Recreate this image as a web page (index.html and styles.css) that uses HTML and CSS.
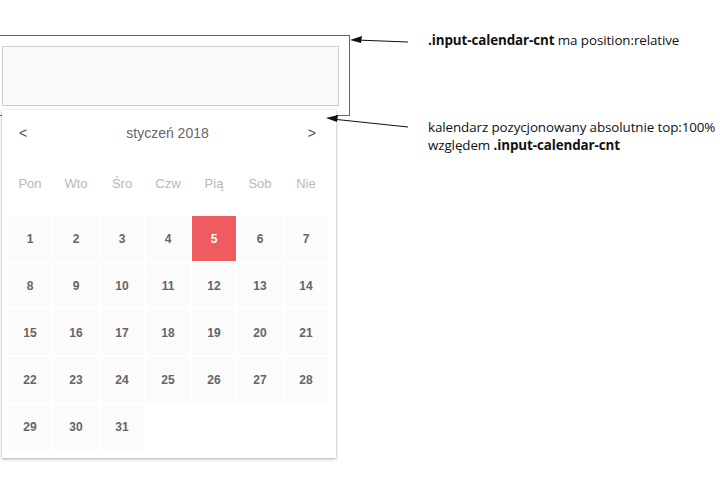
FILE: index.html
```html
<!DOCTYPE html>
<html lang="pl">
<head>
    <meta charset="UTF-8">
    <title>input calendar</title>
    <link rel="stylesheet" href="styles.css">
</head>
<body>
    <div class="stage">
        <div class="input-calendar-cnt">
            <div class="input-wrap">
                <input class="input" type="text">
                <div class="calendar">
                    <div class="cal-head">
                        <span class="cal-nav">&lt;</span>
                        <span class="cal-title">styczeń 2018</span>
                        <span class="cal-nav">&gt;</span>
                    </div>
                    <div class="cal-weekdays">
                        <span>Pon</span><span>Wto</span><span>Śro</span><span>Czw</span><span>Pią</span><span>Sob</span><span>Nie</span>
                    </div>
                    <div class="cal-days">
                        <span class="day">1</span><span class="day">2</span><span class="day">3</span><span class="day">4</span><span class="day active">5</span><span class="day">6</span><span class="day">7</span>
                        <span class="day">8</span><span class="day">9</span><span class="day">10</span><span class="day">11</span><span class="day">12</span><span class="day">13</span><span class="day">14</span>
                        <span class="day">15</span><span class="day">16</span><span class="day">17</span><span class="day">18</span><span class="day">19</span><span class="day">20</span><span class="day">21</span>
                        <span class="day">22</span><span class="day">23</span><span class="day">24</span><span class="day">25</span><span class="day">26</span><span class="day">27</span><span class="day">28</span>
                        <span class="day">29</span><span class="day">30</span><span class="day">31</span>
                    </div>
                </div>
            </div>
        </div>

        <svg class="arrows" width="720" height="478" viewBox="0 0 720 478">
            <line x1="408" y1="42" x2="356" y2="40" stroke="#111" stroke-width="1.2"/>
            <polygon points="350,40 362,36 361,43" fill="#111"/>
            <line x1="408" y1="127" x2="332" y2="119" stroke="#111" stroke-width="1.2"/>
            <polygon points="326,118 338,115 337,122" fill="#111"/>
        </svg>

        <p class="note note-top"><b>.input-calendar-cnt</b> ma position:relative</p>
        <p class="note note-bottom">kalendarz pozycjonowany absolutnie top:100%<br>względem <b>.input-calendar-cnt</b></p>
    </div>
</body>
</html>
```

FILE: styles.css
```css
body {
    margin: 0;
    background: #fff;
    font-family: "Liberation Sans", Arial, sans-serif;
}
.stage {
    position: relative;
    width: 720px;
    height: 478px;
    overflow: hidden;
    padding-top: 35px;
    box-sizing: border-box;
}

.input-calendar-cnt {
    width: 360px;
    margin-left: -10px;
    padding: 10px 10px 9px 11px;
    border: 1px solid #b8434f;
    box-sizing: border-box;
}
.input-wrap {
    position: relative;
}
.input {
    display: block;
    width: 337px;
    height: 60px;
    margin: 0;
    background: #f9f9f9;
    border: 1px solid #cfcfcf;
    box-sizing: border-box;
    outline: none;
}

.calendar {
    position: absolute;
    top: calc(100% + 4px);
    left: 0;
    width: 334px;
    padding: 0 8px 9px 6px;
    box-sizing: border-box;
    background: #fff;
    box-shadow: 0 1px 3px rgba(0, 0, 0, 0.35);
    z-index: 2;
}
.cal-head {
    display: flex;
    justify-content: space-between;
    align-items: center;
    height: 46px;
    padding: 0 12px 0 11px;
    color: #666;
    font-size: 14px;
}
.cal-nav {
    font-size: 14px;
    color: #555;
}
.cal-weekdays {
    display: grid;
    grid-template-columns: repeat(7, 44px);
    column-gap: 2px;
    height: 54px;
    align-items: center;
    text-align: center;
    color: #b8b8b8;
    font-size: 13px;
    margin-bottom: 6px;
}
.cal-days {
    display: grid;
    grid-template-columns: repeat(7, 44px);
    grid-auto-rows: 45px;
    gap: 2px;
}
.day {
    display: flex;
    align-items: center;
    justify-content: center;
    background: #fbfbfb;
    color: #666;
    font-size: 12px;
    font-weight: bold;
}
.day.active {
    background: #ef5b5f;
    color: #fff;
}

.arrows {
    position: absolute;
    top: 0;
    left: 0;
    pointer-events: none;
    z-index: 3;
}
.note {
    position: absolute;
    left: 428px;
    margin: 0;
    font-family: "Open Sans", sans-serif;
    font-size: 13.4px;
    line-height: 18px;
    color: #111;
    letter-spacing: -0.1px;
    white-space: nowrap;
}
.note b {
    font-weight: 700;
}
.note-top {
    top: 31px;
}
.note-bottom {
    top: 118px;
}
```
